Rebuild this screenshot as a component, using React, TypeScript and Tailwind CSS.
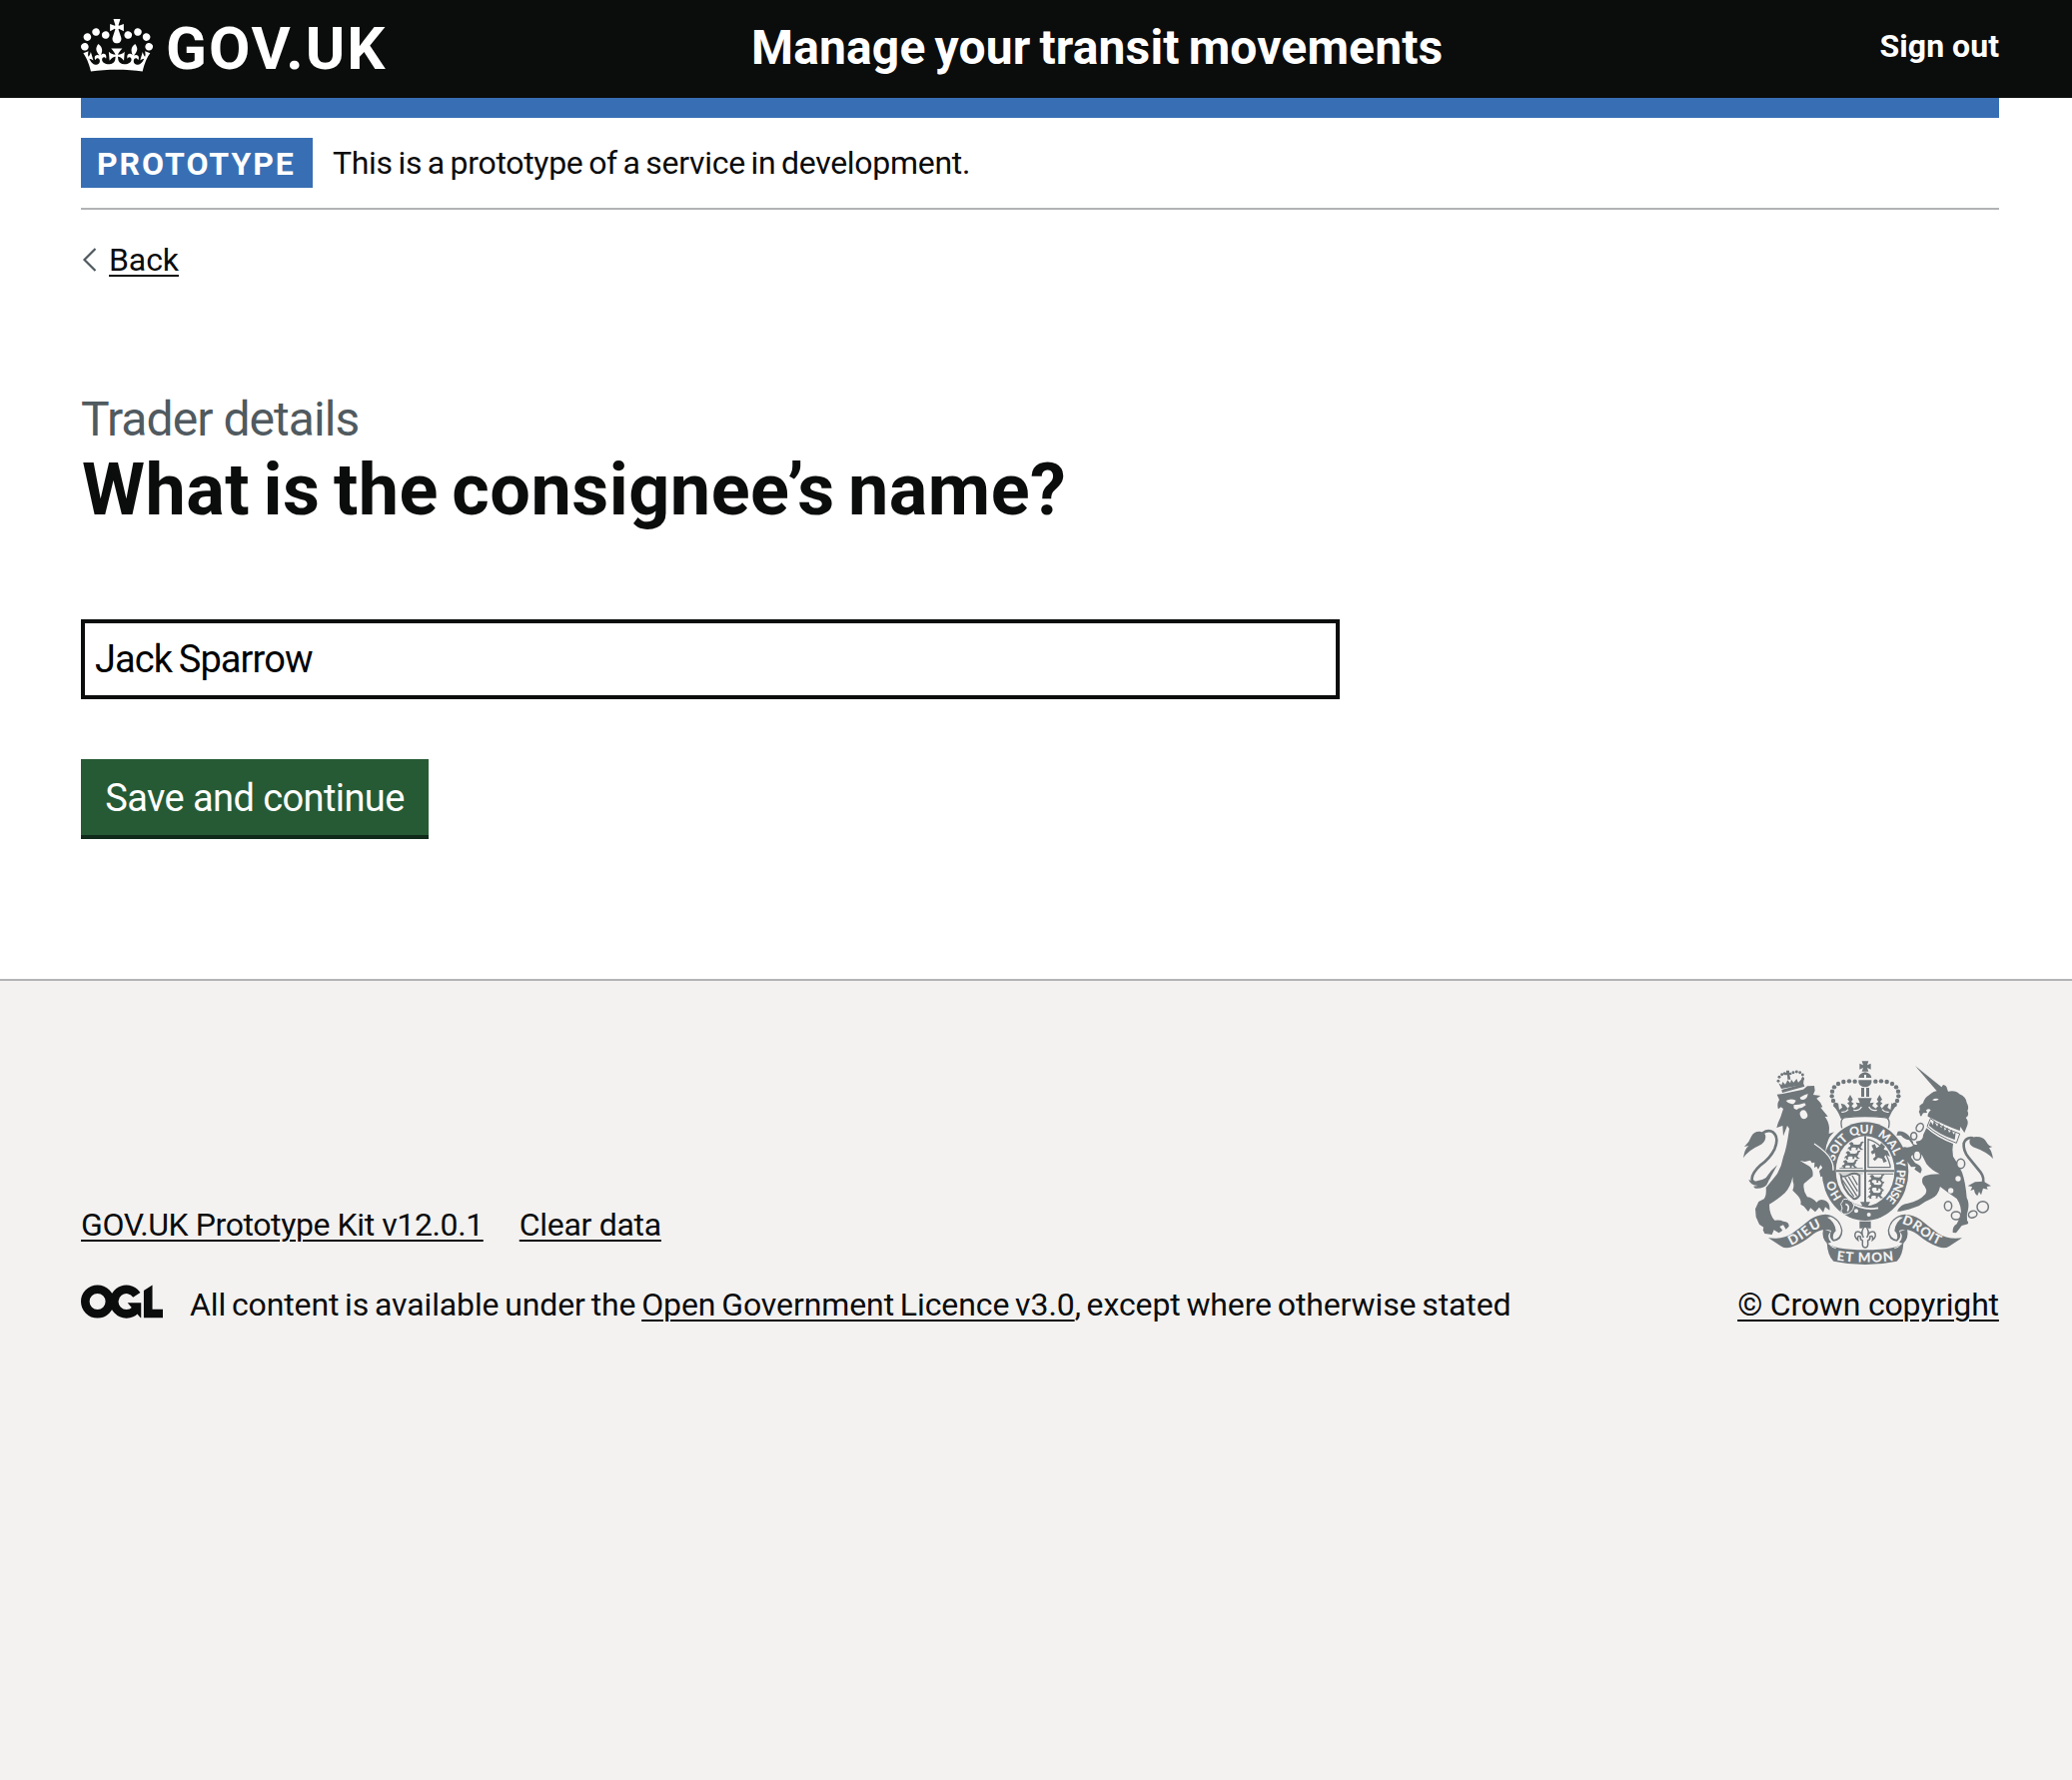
import React from "react";

const LINK =
  "underline decoration-2 underline-offset-[4px] text-[#0b0c0c]";

function CrownLogo() {
  return (
    <svg className="h-[53px] w-[72px] shrink-0" viewBox="0 0 132 97" fill="currentColor" aria-hidden="true">
      <path
        fillRule="evenodd"
        d="M25 30.2c3.5 1.5 7.7-.2 9.1-3.7 1.5-3.6-.2-7.8-3.9-9.2-3.6-1.4-7.6.3-9.1 3.9-1.4 3.5.3 7.5 3.9 9zM9 39.5c3.6 1.5 7.8-.2 9.2-3.7 1.5-3.6-.2-7.8-3.9-9.1-3.6-1.5-7.6.2-9.1 3.8-1.4 3.5.3 7.5 3.8 9zM4.4 57.2c3.5 1.5 7.7-.2 9.1-3.8 1.5-3.6-.2-7.7-3.9-9.1-3.5-1.5-7.6.3-9.1 3.8-1.4 3.5.3 7.6 3.9 9.1zm38.3-21.4c3.5 1.5 7.7-.2 9.1-3.8 1.5-3.6-.2-7.7-3.9-9.1-3.6-1.5-7.6.3-9.1 3.8-1.3 3.6.4 7.7 3.9 9.1zm64.4-5.6c-3.6 1.5-7.8-.2-9.1-3.7-1.5-3.6.2-7.8 3.8-9.2 3.6-1.4 7.7.3 9.2 3.9 1.3 3.5-.4 7.5-3.9 9zm15.9 9.3c-3.6 1.5-7.7-.2-9.1-3.7-1.5-3.6.2-7.8 3.7-9.1 3.6-1.5 7.7.2 9.2 3.8 1.5 3.5-.3 7.5-3.8 9zm4.7 17.7c-3.6 1.5-7.8-.2-9.2-3.8-1.5-3.6.2-7.7 3.9-9.1 3.6-1.5 7.7.3 9.2 3.8 1.3 3.5-.4 7.6-3.9 9.1zM89.3 35.8c-3.6 1.5-7.8-.2-9.2-3.8-1.4-3.6.2-7.7 3.9-9.1 3.6-1.5 7.7.3 9.2 3.8 1.4 3.6-.3 7.7-3.9 9.1zM69.7 17.7l8.9 4.7V9.3l-8.9 2.8c-.2-.3-.5-.6-.9-.9L72.4 0H59.6l3.5 11.2c-.3.3-.6.5-.9.9l-8.8-2.8v13.1l8.8-4.7c.3.3.6.7.9.9l-5 15.4v.1c-.2.8-.4 1.6-.4 2.4 0 4.1 3.1 7.5 7 8.1h.2c.3 0 .7.1 1 .1.4 0 .7 0 1-.1h.2c4-.6 7.1-4.1 7.1-8.1 0-.8-.1-1.7-.4-2.4V34l-5.1-15.4c.4-.2.7-.6 1-.9zM66 92.8c16.9 0 32.8 1.1 47.1 3.2 4-16.9 8.9-26.7 14-33.5l-9.6-3.4c1 4.9 1.1 7.2 0 10.2-1.5-1.4-3-4.3-4.2-8.7L108.6 76c2.8-2 5-3.2 7.5-3.3-4.4 9.4-10 11.9-13.6 11.2-4.3-.8-6.3-4.6-5.6-7.9 1-4.7 5.7-5.9 8-.5 4.3-8.7-3-11.4-7.6-8.8 7.1-7.2 7.9-13.5 2.1-21.1-8 6.1-8.1 12.3-4.5 20.8-4.7-5.4-12.1-2.5-9.5 6.2 3.4-5.2 7.9-2 7.2 3.1-.6 4.3-6.4 7.8-13.5 7.2-10.3-.9-10.9-8-11.2-13.8 2.5-.5 7.1 1.8 11 7.3L80.2 60c-4.1 4.4-8 5.3-12.3 5.4 1.4-4.4 8-11.6 8-11.6H55.5s6.4 7.2 7.9 11.6c-4.2-.1-8-1-12.3-5.4l1.4 16.4c3.9-5.5 8.5-7.7 10.9-7.3-.3 5.8-.9 12.8-11.1 13.8-7.2.6-12.9-2.9-13.5-7.2-.7-5 3.8-8.3 7.1-3.1 2.7-8.7-4.6-11.6-9.4-6.2 3.7-8.5 3.6-14.7-4.6-20.8-5.8 7.6-5 13.9 2.2 21.1-4.7-2.6-11.9.1-7.7 8.8 2.3-5.5 7.1-4.2 8.1.5.7 3.3-1.3 7.1-5.7 7.9-3.5.7-9-1.8-13.5-11.2 2.5.1 4.7 1.3 7.5 3.3l-4.7-15.4c-1.2 4.4-2.7 7.2-4.3 8.7-1.1-3-.9-5.3 0-10.2l-9.5 3.4c5 6.9 9.9 16.7 14 33.5 14.8-2.1 30.8-3.2 47.7-3.2z"
      />
    </svg>
  );
}

function OglMark() {
  return (
    <svg className="h-[34px] w-[82px] shrink-0" viewBox="0 0 483.2 195.7" fill="currentColor" role="img" aria-label="OGL">
      <circle cx="97.8" cy="97.8" r="72.4" fill="none" stroke="currentColor" strokeWidth="50.7" />
      <path d="M329.1 58.9 A72.4 72.4 0 1 0 322 147" fill="none" stroke="currentColor" strokeWidth="50.7" />
      <path d="M275 105.3h80v87.8h-3l-53-60z" />
      <path d="M421.5 142.8V.1l-50.7 32.3v161.1h112.4v-50.7z" />
    </svg>
  );
}

const CROWN_DOTS: [number, number][] = [
  [380, 98], [363, 97], [346, 99], [330, 105], [318, 115], [312, 128], [311, 142], [315, 156], [322, 168],
];

const LION_CROWN_DOTS: [number, number][] = [
  [138, 70], [146, 62], [135, 82], [154, 59], [180, 56], [190, 54], [200, 56], [208, 63], [209, 75],
];

const GREY = "#70777b";
const PAPER = "#f3f2f1";

/* A lion passant, three of which fill an England quarter. */
function Passant({ x, y }: { x: number; y: number }) {
  return (
    <path
      transform={`translate(${x} ${y})`}
      d="M0 20l4-6 4-1 1-6-5-2 3-4 5-2 5 3 1 4 14 1 6-2 2-6 7-2 2 3-5 3-1 6-4 5 4 5 5 3-9 1-5-6-3 0-1 6-6 0 2-5-3-3-8 0-4 3 1 6-6 0-1-5-3 2z"
    />
  );
}

function RoyalArms() {
  return (
    <svg className="h-[205px] w-[250px]" viewBox="45 36 750 615" fill={GREY} role="img" aria-label="Royal coat of arms">
      <defs>
        <path id="garter" d="M411 480 A95 113 0 0 1 411 254 A95 113 0 0 1 411 480" />
        <path id="dieu" d="M188 591 Q228 572 250 551 Q268 539 296 529" />
        <path id="etmon" d="M325 635 Q411 647 500 635" />
        <path id="droit" d="M520 525 Q550 532 578 556 Q603 579 652 596" />
      </defs>

      {/* imperial crown */}
      <path d="M401 37h20l-4 12 11-5v18l-11-5 4 11h-20l4-11-11 5v-18l11 5z" />
      <path d="M391 87q2-14 20-17q17 3 19 17h-16v-9h-6v9z" />
      <path d="M391 94h39v7q-4 13-19 14q-16-1-20-14z" />
      <path d="M399 117h9v27h-9zM414 117h9v27h-9z" />
      {CROWN_DOTS.map(([x, y]) => (
        <g key={x}>
          <circle cx={x} cy={y} r="6.6" />
          <circle cx={822 - x} cy={y} r="6.6" />
        </g>
      ))}
      <path d="M316 170l14-7 3 20 9-7-4-12 11 3 10 12 5-8-7-8 7-4-6-7 8-14 8 14-5 7 8 5-7 8 8 7 10-8-5-10 12 2-6-15h42l-6 15 12-2-5 10 10 8 8-7-7-8 8-5-5-7 8-14 8 14-6 7 7 4-7 8 5 8 10-12 11-3-4 12 9 7 3-20 14 7q-14 17-23 40q-72-14-143 0q-8-24-24-40z" />
      <path d="M376 184q16 4 24-10M446 184q-16 4-24-10M340 190q12 2 20-8M482 190q-12 2-20-8" fill="none" stroke={PAPER} strokeWidth="4" />

      {/* garter */}
      <ellipse cx="411" cy="368" rx="130" ry="148" />
      <path d="M345 222q2-14 66-14t66 14q-30-6-66-6t-66 6z" fill={PAPER} />
      <path d="M343 236q-6-27 14-25q54-8 108 0q20-2 14 25" fill="none" stroke={PAPER} strokeWidth="11" />
      <path d="M341 238q-8-32 14-32q56-7 112 0q22 0 14 32" fill="none" stroke={GREY} strokeWidth="4" />
      <ellipse cx="411" cy="367" rx="88" ry="105" fill={PAPER} />
      <g fill={PAPER} fontFamily="Lato, sans-serif" fontWeight="900" fontSize="36">
        <text><textPath href="#garter" startOffset="80">HO</textPath></text>
        <text><textPath href="#garter" startOffset="192" textLength="80">SOIT</textPath></text>
        <text><textPath href="#garter" startOffset="283" textLength="65">QUI</textPath></text>
        <text><textPath href="#garter" startOffset="364" textLength="80">MAL</textPath></text>
        <text><textPath href="#garter" startOffset="456">Y</textPath></text>
        <text><textPath href="#garter" startOffset="486" textLength="98">PENSE</textPath></text>
      </g>

      {/* quartered shield */}
      <path d="M408 262h6v210h-6z" />
      <path d="M323 364h176v6h-176z" />
      <path d="M334 358h70v2h-70zM330 374h74v2h-74zM418 374h78v3h-78z" />
      <Passant x={358} y={281} />
      <Passant x={348} y={308} />
      <Passant x={340} y={335} />
      <Passant x={420} y={379} />
      <Passant x={420} y={402} />
      <Passant x={418} y={426} />
      <path d="M420 272q48 12 66 78v6h-66z" fill="none" stroke={GREY} strokeWidth="4" />
      <path d="M430 290l10-4 5 12 10-6 4-10 12 12-5 8 12 4 8 18-12-6-6 6 8 14-10 4-4-12-12-3-10 10-6-6 8-8-2-10-8 4-4-8 8-6z" />
      <path d="M338 380q8 8 26-2q18-8 30 2v60q-10 14-18 10q-34-26-38-70z" fill="none" stroke={GREY} strokeWidth="6" />
      <path d="M350 386l36 56M361 384l27 44M372 381l16 28M343 394l34 50" fill="none" stroke={GREY} strokeWidth="4" />
      <path d="M396 460h30l-8 14h-14z" />
      <path d="M356 456q50 32 94 22" fill="none" stroke={PAPER} strokeWidth="5" />
      <circle cx="384" cy="487" r="6" fill={PAPER} />
      <circle cx="422" cy="498" r="6" fill={PAPER} />
      <path d="M342 460q2-12 16-8l14 8q10 10 2 22q-10 16-28 14q-12-6-4-16l-2-8q-6-6 2-12z" stroke={PAPER} strokeWidth="3" />
      <path d="M352 466q14 4 6 22" fill="none" stroke={PAPER} strokeWidth="5" />

      {/* lion */}
      <g transform="translate(15 15)">
        <path d="M145 108l66-18 3 8-67 19z" />
        <path d="M144 105l-8-17 9 6 3-10 8 8 7-13 8 9 3-11 7 9 9-11 5 11 10-10 4-8 3 7-2 18z" />
        <path d="M159 50h9v6h7v7h-6l3 14h-9l-1-13h-7v-7h4z" />
        {LION_CROWN_DOTS.map(([x, y]) => (
          <circle key={`${x}-${y}`} cx={x} cy={y} r="4.4" />
        ))}
        <path d="M131 122L148 120L210 107L222 97L243 96L245 110L240 123L262 126L250 134Q263 145 268 160L262 161L284 188L275 189Q286 202 288 222L287 240L303 235Q288 248 284 262Q278 275 277 292L288 300Q300 322 303 350L307 378L296 372L291 380L285 368L274 378L273 366L262 370L258 352L268 342L262 334L255 347L250 338L243 342L244 326L236 328L231 320L215 324L200 321L229 338Q242 350 238 368L212 390Q208 410 222 430Q238 432 250 446Q258 434 275 440Q292 448 289 470L276 460L270 476L258 461L246 475L232 463L225 474L212 458L202 452Q206 438 190 422L178 410Q184 396 179 384L178 370Q172 400 155 418Q135 436 108 452Q108 482 124 500Q142 498 150 503Q168 504 167 518L158 527L150 514L139 519L148 530L137 538L122 529L116 543L94 540L89 529L91 521L78 512L68 490L66 466L76 444L92 436Q100 426 98 402Q120 376 132 360Q146 335 150 310Q160 285 168 225L162 216L150 247L148 216L130 222Q134 206 142 190L150 165L143 160L135 166Q130 150 138 138z" />
        <path d="M158 141Q172 132 188 140Q184 151 176 151Q164 149 158 141zM200 131Q212 124 224 120Q222 138 206 138Q200 136 200 131z" fill={PAPER} />
        <path d="M181 154Q198 154 214 148L218 154L206 162Q196 162 190 168L182 164zM200 176Q206 166 216 170Q226 182 222 190Q214 200 204 192Q198 184 200 176z" fill={PAPER} />
        <path d="M243 270Q282 296 293 318Q301 332 300 350" fill="none" stroke={PAPER} strokeWidth="4" />
        <path d="M30 313Q34 285 46 276L33 279Q48 265 54 248Q62 232 80 233Q98 236 97 250Q96 268 78 275Q44 290 30 313z" />
        <path d="M88 238Q106 226 120 236Q138 252 124 286Q110 314 82 334Q54 360 56 378Q62 396 90 384" fill="none" stroke={GREY} strokeWidth="8" />
        <path d="M132 334Q112 350 98 372L88 378L108 378z" />
        <path d="M46 377Q58 386 74 381L110 372Q104 388 100 394Q90 406 66 404L60 398L74 396Q50 394 46 377z" />
      </g>

      {/* unicorn */}
      <path d="M561 51l82 66-13 14z" />
      <path d="M575 183l-1-12 11-8q4-16 18-24q12-13 30-14l12-17q11 2 12 12l3 8q24-4 34 8q20 8 22 26q8 14 2 24q7 14-5 21q10 10 4 25q-4 10-8 20l-12-18-2 12q-44-16-96-43q-2-8 9-19q-6-6-14 0l3 8-12 1-6 10q-5-3-4-8l-3-6z" />
      <path d="M612 154q10-7 20-3q-6 8-20 3z" fill={PAPER} />
      <path d="M607 209q30 26 88 46l-10 28q-54-20-88-50z" fill={PAPER} stroke={GREY} strokeWidth="3" />
      <path d="M602 230l6-12 6 11 4-14 9 18 6-12 6 17 7-10 4 17 8-9 5 16 8-9 5 14 7-8-3 24q-48-16-78-43z" />
      <path d="M595 238q32 30 80 47q-4 20 0 38q14 20 27 48q10 28 14 76q8 16 4 36q-6 16-3 32q8 10-2 12l-14 4-17 22-10-1q-2-18 12-26l12-26q4-26-12-50q-24-16-50-36q-6 28-26 36q-20 8-38 22l-30 10-26 6h-9q10-22 32-24q34-6 53-28q8-12-8-30q-6-18 6-24q14-6 45-6q-24-10-40-30l-14-28q-14 2-24-1q-12 4-6 12l10 14q20 8 20 21l-4 10-18-12 4-8-14 1-12-17-14-6 2-26-6-6q6-8 18-4q14-2 18-6l-12-16q-18-4-24-14h-14l4-12q20-2 34 14l12 18q-2 10 12 8l-4-10 12-2q10-4 10-17z" />
      <path d="M795 330q-4-24-12-32l10-4q-12-2-18-14q-6-12-20-15q-22-4-30 8q-4 14 10 22q40 14 60 35z" />
      <path d="M735 268q-22-4-28 16q-2 22 14 42l36 44q14 20 6 36q-6 6-22 4" fill="none" stroke={GREY} strokeWidth="8" />
      <path d="M719 412l22-12 26-2 22 14-13 2 3 8-14-3-6 20-6-10-5 12q-9-6-10-19l-11 4q4-6 5-12z" />

      {/* chain */}
      <g fill="none" stroke={GREY} strokeWidth="4.5">
        <ellipse cx="575" cy="236" rx="10" ry="13" transform="rotate(30 575 236)" />
        <ellipse cx="557" cy="262" rx="9" ry="11" fill={PAPER} />
        <ellipse cx="567" cy="320" rx="11" ry="14" fill={PAPER} />
        <ellipse cx="698" cy="345" rx="12" ry="14" fill={PAPER} />
        <ellipse cx="660" cy="472" rx="11" ry="14" />
        <ellipse cx="684" cy="501" rx="14" ry="12" />
        <ellipse cx="734" cy="497" rx="13" ry="10" transform="rotate(-20 734 497)" />
        <circle cx="764" cy="475" r="17" />
      </g>
      <circle cx="690" cy="390" r="8" fill={PAPER} />
      <circle cx="668" cy="426" r="8" fill={PAPER} />

      {/* pendant */}
      <path d="M394 518h34v21h-8l-9-8-9 8h-8z" />
      <path d="M411 531q16 16 5 36q8-22 22-17q10 12-5 24q3-15-8-10q2 10-6 12v6q2 14-8 15q-10-1-8-15v-6q-8-2-6-12q-11-5-8 10q-15-12-5-24q14-5 22 17q-11-20 5-36z" fill={PAPER} stroke={GREY} strokeWidth="4.5" />

      {/* scroll */}
      <path d="M285 541q-6 28 12 44l12-4q-16-16-2-32z" />
      <path d="M537 541q6 28-12 44l-12-4q16-16 2-32z" />
      <path d="M120 568q42 6 72-14q30-22 54-42q20-14 46-15q42 4 51 48q0 30-28 33q-16-12-6-32q-26-10-56 12q-30 26-62 37q-20 6-32-2z" />
      <path d="M702 568q-42 6-72-14q-30-22-54-42q-20-14-46-15q-42 4-51 48q0 30 28 33q16-12 6-32q26-10 56 12q30 26 62 37q20 6 32-2z" />
      <path d="M308 505q26 10 31 40q-1 22-22 28q-8-14 6-26q-2-28-26-41z" fill={PAPER} />
      <path d="M514 505q-26 10-31 40q1 22 22 28q8-14-6-26q2-28 26-41z" fill={PAPER} />
      <path d="M296 582q20 22 115 22t115-22q-2 40-20 56q-95 20-190 0q-18-16-20-56z" />
      <path d="M303 585q6 12 20 14M519 585q-6 12-20 14" fill="none" stroke={PAPER} strokeWidth="3" />
      <g fill={PAPER} fontFamily="Lato, sans-serif" fontWeight="900" fontSize="40">
        <text><textPath href="#dieu" textLength="108">DIEU</textPath></text>
        <text><textPath href="#etmon" textLength="172">ET MON</textPath></text>
        <text fontSize="39"><textPath href="#droit" textLength="130">DROIT</textPath></text>
      </g>
    </svg>
  );
}

export default function App() {
  return (
    <div className="flex min-h-screen flex-col bg-white font-['Roboto',sans-serif] text-[32px] leading-[40px] text-[#0b0c0c]">
      <header className="bg-[#0b0c0c] text-white">
        <div className="ml-[81px] flex h-[98px] w-[1920px] items-start">
          <a className="flex w-[671px] items-start gap-[13px] pt-[19px]">
            <CrownLogo />
            <span className="text-[60px] leading-[60px] font-bold tracking-[1.98px]">GOV.UK</span>
          </a>
          <span className="pt-[18px] text-[48px] leading-[60px] font-bold tracking-[0.13px] [word-spacing:-3px]">
            Manage your transit movements
          </span>
          <a className="ml-auto pt-[26px] font-bold tracking-[0.03px]">Sign out</a>
        </div>
      </header>

      <div className="ml-[81px] w-[1920px]">
        <div className="h-5 bg-[#386fb4]" />
        <div className="flex border-b-2 border-[#b1b3b5] py-5">
          <strong className="mr-5 h-[50px] w-[232px] bg-[#386fb4] pt-px pl-4 leading-[50px] font-bold tracking-[1.96px] text-white">
            PROTOTYPE
          </strong>
          <span className="leading-[50px] tracking-[-0.3px] [word-spacing:-2px]">
            This is a prototype of a service in development.
          </span>
        </div>

        <a className="mt-[30px] flex items-center">
          <svg className="h-6 w-7 shrink-0" viewBox="0 0 28 24" fill="none" stroke="#505a5f" strokeWidth="2.2">
            <path d="M14.5 1 L3.5 12 L14.5 23" />
          </svg>
          <span className={`${LINK} tracking-[-0.1px]`}>Back</span>
        </a>

        <main>
          <span className="mt-28 block text-[48px] leading-[56px] tracking-[-0.94px] text-[#505a5f]">Trader details</span>
          <h1 className="mt-1 pl-px text-[72px] leading-[78px] font-bold tracking-[0.48px] [word-spacing:-5px]">
            What is the consignee’s name?
          </h1>
          <input
            className="mt-[90px] block h-20 w-[1260px] border-4 border-[#0b0c0c] px-[10px] text-[38px] tracking-[-0.9px] text-black outline-none [word-spacing:-2px]"
            defaultValue="Jack Sparrow"
          />
          <button className="mt-[60px] block h-20 w-[348px] border-b-4 border-[#10291a] bg-[#265a34] pt-px text-[38px] leading-[74px] tracking-[-0.59px] text-white">
            Save and continue
          </button>
        </main>
      </div>

      <footer className="mt-[140px] flex-1 border-t-2 border-[#b1b3b5] bg-[#f3f2f1] pt-20">
        <div className="ml-[81px] flex w-[1920px] items-end justify-between">
          <div>
            <div className="flex gap-[36px]">
              <a className={`${LINK} tracking-[-0.4px]`}>GOV.UK Prototype Kit v12.0.1</a>
              <a className={`${LINK} tracking-[-0.3px]`}>Clear data</a>
            </div>
            <div className="mt-10 flex">
              <OglMark />
              <span className="ml-[27px] tracking-[-0.12px] [word-spacing:-2px]">
                All content is available under the{" "}
                <a className={`${LINK} tracking-[-0.1px]`}>Open Government Licence v3.0</a>, except where otherwise stated
              </span>
            </div>
          </div>
          <div className="flex w-[262px] flex-col items-center gap-[19px]">
            <RoyalArms />
            <a className={`${LINK} whitespace-nowrap tracking-[-0.19px]`}>© Crown copyright</a>
          </div>
        </div>
      </footer>
    </div>
  );
}
